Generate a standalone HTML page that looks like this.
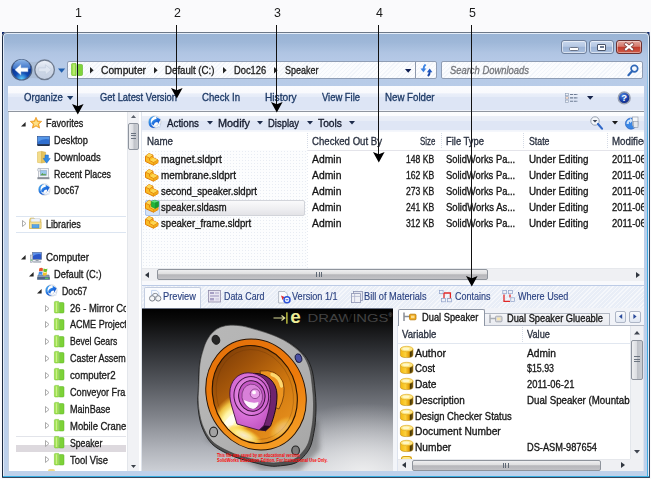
<!DOCTYPE html>
<html><head><meta charset="utf-8">
<style>
html,body{margin:0;padding:0;background:#fafafc;}
body{width:651px;height:479px;position:relative;overflow:hidden;font-family:"Liberation Sans",sans-serif;font-size:11.5px;color:#111;}
.a{position:absolute;}
svg{overflow:visible}
.t{position:absolute;white-space:nowrap;line-height:14px;height:14px;transform-origin:0 50%;-webkit-text-stroke:.32px currentColor;}
</style></head><body>
<div class="a" style="left:2px;top:32px;width:647.5px;height:446px;background:linear-gradient(180deg,#9ab4d5 0px,#9eb7d8 9px,#b0c5e3 20px,#b6cae7 30px,#b9cde9 80px,#bed1eb 100%);border:1px solid #35455c;border-top-color:#6d7887;border-left-color:#1c2a40;box-sizing:border-box;border-radius:5px 5px 1px 1px;box-shadow:inset 0 0 0 1px #e3ecf8;"></div>
<div class="a" style="left:2px;top:32px;width:3px;height:3px;background:#0a246a;border-radius:0;clip-path:polygon(0 0,100% 0,0 100%)"></div>
<div class="a" style="left:646.5px;top:32px;width:3px;height:3px;background:#0a246a;clip-path:polygon(0 0,100% 0,100% 100%)"></div>
<div class="a" style="left:3px;top:476px;width:645.5px;height:1px;background:#38aee2"></div>
<div class="a" style="left:647.2px;top:36px;width:1.3px;height:440px;background:linear-gradient(180deg,rgba(63,169,224,0) 0,#3fa9e0 120px)"></div>
<div class="a" style="left:561px;top:40px;width:26px;height:14px;border:1px solid #6f809c;box-sizing:border-box;border-radius:3px;box-shadow:inset 0 0 0 1px rgba(255,255,255,.55);background:linear-gradient(180deg,#c9d8ee 0%,#b6c8e3 45%,#9db4d6 50%,#a9bfde 100%);"></div>
<div class="a" style="left:589px;top:40px;width:25px;height:14px;border:1px solid #6f809c;box-sizing:border-box;border-radius:3px;box-shadow:inset 0 0 0 1px rgba(255,255,255,.55);background:linear-gradient(180deg,#c9d8ee 0%,#b6c8e3 45%,#9db4d6 50%,#a9bfde 100%);"></div>
<div class="a" style="left:616px;top:40px;width:25.5px;height:14px;border:1px solid #6a3030;box-sizing:border-box;border-radius:3px;box-shadow:inset 0 0 0 1px rgba(255,255,255,.4);background:linear-gradient(180deg,#e3a59c 0%,#d47a6e 45%,#c1392b 50%,#cf5a48 100%);"></div>
<div class="a" style="left:569px;top:46.5px;width:10px;height:4px;background:#fff;border:1px solid #6a7488;box-sizing:border-box;border-radius:1.5px"></div>
<div class="a" style="left:597px;top:43.5px;width:9px;height:7px;background:#fff;border:1px solid #4a5468;box-sizing:border-box;border-radius:1px"></div>
<div class="a" style="left:599.5px;top:46px;width:4px;height:2px;background:#6a7890"></div>
<svg class="a" style="left:623.7px;top:43.2px" width="10" height="8" viewBox="0 0 10 8"><path d="M2 1.4 L8 6.2 M8 1.4 L2 6.200" stroke="#7a3a3a" stroke-width="3.400" stroke-linecap="square"/><path d="M2 1.400 L8 6.200 M8 1.400 L2 6.200" stroke="#fff" stroke-width="2.100" stroke-linecap="square"/></svg>
<svg class="a" style="left:9px;top:58px" width="60" height="24" viewBox="0 0 60 24">
<defs>
<radialGradient id="bk_2" cx="50%" cy="95%" r="75%"><stop offset="0" stop-color="#5fd0ff"/><stop offset=".45" stop-color="#1048b0"/><stop offset="1" stop-color="#0a2f86"/></radialGradient>
<linearGradient id="bk2_2" x1="0" y1="0" x2="0" y2="1"><stop offset="0" stop-color="#9cc4f2"/><stop offset="1" stop-color="#3470cc"/></linearGradient>
<linearGradient id="fw_2" x1="0" y1="0" x2="0" y2="1"><stop offset="0" stop-color="#eef2f9"/><stop offset=".5" stop-color="#d0d9e8"/><stop offset="1" stop-color="#c3cee0"/></linearGradient>
</defs>
<path d="M12 2 Q24 6 35 2 L35 22 Q24 18 12 22 Z" fill="#a9bad3" opacity=".8"/>
<circle cx="12.6" cy="11.8" r="10.2" fill="url(#bk_2)" stroke="#4b5f80" stroke-width="1.2"/>
<path d="M3.6 10.5 A9 9 0 0 1 21.6 10.5 Q12.6 13.5 3.6 10.5Z" fill="url(#bk2_2)" opacity=".9"/>
<path d="M5.8 11.8 L12 6.3 L12 9.8 L19 9.8 L19 13.8 L12 13.8 L12 17.3 Z" fill="#fff" stroke="#8aa8d8" stroke-width=".5"/>
<circle cx="35.6" cy="11.8" r="9.8" fill="url(#fw_2)" stroke="#6f7b8e" stroke-width="1.3"/>
<path d="M42.4 11.8 L36.4 6.8 L36.4 9.9 L29.6 9.9 L29.6 13.7 L36.4 13.7 L36.4 16.8 Z" fill="#dfe6f1" stroke="#c0cbdc" stroke-width=".6"/>
<path d="M49 10.6 L56.2 10.6 L52.6 14.8 Z" fill="#1f5fae"/>
</svg>
<div class="a" style="left:67px;top:61px;width:370px;height:18px;border:1px solid #8f9db4;box-sizing:border-box;border-radius:2px;background-color:#fbfcfe;background-image:repeating-linear-gradient(135deg,rgba(170,190,220,.12) 0 1px,transparent 1px 3px);"></div>
<div class="a" style="left:415px;top:62px;width:1px;height:16px;background:#8d98ac"></div>
<svg class="a" style="left:70.5px;top:62.5px" width="12" height="13" viewBox="0 0 12 13"><path d="M0.5 1.5 Q0.5 0.5 1.5 0.5 L5 0.5 L5 12.5 L1.5 12.5 Q0.5 12.5 0.5 11.5Z" fill="#9be048" stroke="#6cbf2a" stroke-width=".6"/><path d="M6 1.5 L10.5 1.5 Q11.5 1.5 11.5 2.5 L11.5 11.5 Q11.5 12.5 10.5 12.5 L6 12.5Z" fill="#7fd43a" stroke="#5fb626" stroke-width=".6"/><rect x="2.3" y="1.5" width="1.4" height="10" fill="#c8f08c" opacity=".8"/></svg>
<svg class="a" style="left:89.5px;top:67px" width="4" height="6.5" viewBox="0 0 4 6.5"><path d="M0 0 L3.6 3.25 L0 6.5Z" fill="#222"/></svg>
<svg class="a" style="left:153.5px;top:67px" width="4" height="6.5" viewBox="0 0 4 6.5"><path d="M0 0 L3.6 3.25 L0 6.5Z" fill="#222"/></svg>
<svg class="a" style="left:222.5px;top:67px" width="4" height="6.5" viewBox="0 0 4 6.5"><path d="M0 0 L3.6 3.25 L0 6.5Z" fill="#222"/></svg>
<svg class="a" style="left:273.5px;top:67px" width="4" height="6.5" viewBox="0 0 4 6.5"><path d="M0 0 L3.6 3.25 L0 6.5Z" fill="#222"/></svg>
<span class="t" style="left:100.5px;top:62.9px;font-size:10.5px;color:#1c1c1c;transform:scaleX(0.976);">Computer</span>
<span class="t" style="left:164.5px;top:62.9px;font-size:10.5px;color:#1c1c1c;transform:scaleX(0.922);">Default (C:)</span>
<span class="t" style="left:233.7px;top:62.9px;font-size:10.5px;color:#1c1c1c;transform:scaleX(0.887);">Doc126</span>
<span class="t" style="left:285.3px;top:62.9px;font-size:10.5px;color:#1c1c1c;transform:scaleX(0.854);">Speaker</span>
<svg class="a" style="left:404.5px;top:68.5px" width="7" height="4" viewBox="0 0 7 4"><path d="M0 0 L6.4 0 L3.2 3.8Z" fill="#0c1c50"/></svg>
<svg class="a" style="left:419.5px;top:64px" width="13" height="12.5" viewBox="0 0 13 12.5"><path d="M5.600 .6 Q3.400 2.400 3.600 5" fill="none" stroke="#3f86e4" stroke-width="2"/><path d="M.5 4.500 L6.300 4.500 L3.400 8.200Z" fill="#3a7fe0"/><path d="M9.600 7.800 Q9.800 10.400 7.800 12" fill="none" stroke="#1c48a4" stroke-width="2"/><path d="M6.900 8.200 L12.400 8.200 L9.700 4.500Z" fill="#2058c0"/></svg>
<div class="a" style="left:441px;top:61px;width:202px;height:18px;border:1px solid #8f9db4;box-sizing:border-box;border-radius:2px;background-color:#fbfcfe;background-image:repeating-linear-gradient(135deg,rgba(170,190,220,.12) 0 1px,transparent 1px 3px);"></div>
<span class="t" style="left:449.5px;top:62.9px;font-size:10.5px;color:#75777c;transform:scaleX(0.896);font-style:italic;">Search Downloads</span>
<svg class="a" style="left:627px;top:63.5px" width="12" height="13" viewBox="0 0 12 13"><circle cx="7.4" cy="4.6" r="3.3" fill="#f4f8fd" stroke="#2f67b8" stroke-width="1.7"/><path d="M5 7.2 L1.4 11.2" stroke="#2f67b8" stroke-width="2.2" stroke-linecap="round"/></svg>
<div class="a" style="left:8px;top:85.5px;width:636px;height:25.5px;background:linear-gradient(180deg,#fafbfe 0px,#f9fafd 6.5px,#e9eef9 8px,#e6ecf8 10.5px,#dde5f5 11.5px,#dde5f5 23.5px,#eef2fa 24.2px,#eef2fa 25.5px);"></div>
<span class="t" style="left:23.6px;top:90.4px;font-size:10.5px;color:#1e3a66;transform:scaleX(0.913);">Organize</span>
<svg class="a" style="left:67px;top:96px" width="6.4" height="4" viewBox="0 0 6.4 4"><path d="M0 0 L6.400 0 L3.200 3.900Z" fill="#1e3a66"/></svg>
<span class="t" style="left:99.7px;top:90.4px;font-size:10.5px;color:#1e3a66;transform:scaleX(0.890);">Get Latest Version</span>
<span class="t" style="left:202.0px;top:90.4px;font-size:10.5px;color:#1e3a66;transform:scaleX(0.917);">Check In</span>
<span class="t" style="left:265.0px;top:90.4px;font-size:10.5px;color:#1e3a66;transform:scaleX(0.970);">History</span>
<span class="t" style="left:322.0px;top:90.4px;font-size:10.5px;color:#1e3a66;transform:scaleX(0.896);">View File</span>
<span class="t" style="left:385.0px;top:90.4px;font-size:10.5px;color:#1e3a66;transform:scaleX(0.924);">New Folder</span>
<svg class="a" style="left:565px;top:93px" width="14" height="10" viewBox="0 0 14 10"><rect x=".5" y=".3" width="3" height="2.4" fill="#eef2f8" stroke="#8d9bb3" stroke-width=".6"/><rect x=".5" y="3.7" width="3" height="2.4" fill="#f6d9c8" stroke="#8d9bb3" stroke-width=".6"/><rect x=".5" y="7.1" width="3" height="2.4" fill="#eef2f8" stroke="#8d9bb3" stroke-width=".6"/><path d="M5 1.5 H13 M5 4.9 H13 M5 8.3 H13" stroke="#6e7c94" stroke-width="1.1" stroke-dasharray="3 .8"/></svg>
<svg class="a" style="left:586.8px;top:96.2px" width="6.4" height="4" viewBox="0 0 6.4 4"><path d="M0 0 L6.400 0 L3.200 3.800Z" fill="#16234a"/></svg>
<svg class="a" style="left:616px;top:90px" width="16" height="16" viewBox="0 0 16 16"><defs><radialGradient id="hp_14" cx="40%" cy="30%" r="75%"><stop offset="0" stop-color="#4e86e0"/><stop offset=".6" stop-color="#1a3fa8"/><stop offset="1" stop-color="#0b1f78"/></radialGradient></defs><circle cx="8.200" cy="7.900" r="5.900" fill="url(#hp_14)" stroke="#98a0b0" stroke-width="1.500"/><text x="8.200" y="11.400" font-size="9.500" font-weight="bold" text-anchor="middle" fill="#fff" font-family="Liberation Sans,sans-serif">?</text></svg>
<div class="a" style="left:8px;top:111px;width:636px;height:360px;background:#fff"></div>
<div class="a" style="left:8px;top:111px;width:119px;height:360px;background:#fff"></div>
<div class="a" style="left:8px;top:111px;width:1px;height:360px;background:#c9d3e0"></div>
<svg class="a" style="left:21px;top:121.5px" width="5" height="5" viewBox="0 0 5 5"><path d="M4.6 0 L4.6 4.6 L0 4.6Z" fill="#262626"/></svg>
<svg class="a" style="left:29.5px;top:117px" width="12" height="11.5" viewBox="0 0 12 11.5"><path d="M6 .3 L7.7 4 L11.7 4.4 L8.7 7.1 L9.6 11.1 L6 9 L2.4 11.1 L3.3 7.1 L.3 4.4 L4.3 4Z" fill="#f9b93a" stroke="#e8901c" stroke-width=".7"/><path d="M6 2.6 L7 5 L9.4 5.3 L7.6 6.9 L8.1 9.2 L6 8 L3.9 9.2 L4.4 6.9 L2.6 5.3 L5 5Z" fill="#fde08a"/></svg>
<span class="t" style="left:45.7px;top:116.4px;font-size:10.5px;color:#1a1a1a;transform:scaleX(0.864);">Favorites</span>
<svg class="a" style="left:37px;top:135.5px" width="13" height="10.5" viewBox="0 0 13 10.5"><rect x=".4" y=".4" width="12.2" height="8.4" fill="#2f6fd0" stroke="#27457c" stroke-width=".6"/><path d="M.7 6 Q6 2 12.3 3.4 L12.3 .7 L.7 .7Z" fill="#5fa0ec" opacity=".8"/><rect x=".4" y="8.2" width="12.2" height="1.8" fill="#22324e"/></svg>
<span class="t" style="left:53.8px;top:133.3px;font-size:10.5px;color:#1a1a1a;transform:scaleX(0.880);">Desktop</span>
<svg class="a" style="left:37px;top:150.5px" width="13.5" height="13" viewBox="0 0 13.5 13"><path d="M.5 1 L4.6 .4 L4.6 12 L.5 11.4Z" fill="#f3dc8a" stroke="#d9b64c" stroke-width=".5"/><path d="M4.6 .4 L8.6 1.2 L8.6 11.2 L4.6 12Z" fill="#e5c45c" stroke="#cfa43a" stroke-width=".5"/><path d="M8 4 L11.4 4 L11.4 7.4 L13.2 7.4 L9.7 12.2 L6.2 7.4 L8 7.4Z" fill="#2f8be6" stroke="#1c62c0" stroke-width=".5"/></svg>
<span class="t" style="left:53.8px;top:150.1px;font-size:10.5px;color:#1a1a1a;transform:scaleX(0.899);">Downloads</span>
<svg class="a" style="left:37px;top:168px" width="12.5" height="11.5" viewBox="0 0 12.5 11.5"><rect x="1.4" y=".4" width="10" height="9.4" fill="#f2f4f7" stroke="#a9afb9" stroke-width=".7"/><rect x="3.2" y="2.4" width="6.4" height="5" fill="#9cc8ee" stroke="#7b93ad" stroke-width=".4"/><path d="M3.4 7.2 L5.4 5 L7 6.4 L8 5.6 L9.4 7.2Z" fill="#5aa04a"/><rect x=".4" y="9.2" width="12" height="2" fill="#8a9098"/><circle cx="2" cy="1.8" r="1.6" fill="#dfe3ea" stroke="#9aa2ae" stroke-width=".4"/></svg>
<span class="t" style="left:53.8px;top:166.7px;font-size:10.5px;color:#1a1a1a;transform:scaleX(0.842);">Recent Places</span>
<svg class="a" style="left:37.5px;top:183.3px" width="12.5" height="12.5" viewBox="0 0 12.5 12.5"><defs><linearGradient id="sy_20" x1="0" y1="0" x2="1" y2="1"><stop offset="0" stop-color="#58c0f4"/><stop offset=".5" stop-color="#1f6fe0"/><stop offset="1" stop-color="#1448b8"/></linearGradient></defs><circle cx="6.3" cy="6.5" r="5.7" fill="#fdfdfe" stroke="#c4c8d0" stroke-width=".7"/><path d="M6.6 .9 Q1.8 2.6 2.6 7.4 Q3.2 10.6 7.4 12 Q.6 12.6 .5 6.6 Q.6 1.2 6.6 .9Z" fill="url(#sy_20)"/><path d="M3 8.4 Q3.2 4.600 8 3.400 L7.400 1.600 L11.600 4.200 L9.400 8.400 L8.800 6.400 Q5.800 6.400 5.400 9.600Z" fill="url(#sy_20)"/><path d="M3.400 9.200 Q6 11.400 9 9.600 L8.200 8.800 L11.400 8.200 L10.800 11.600 L10 10.600 Q6.400 13 3.400 9.200Z" fill="#fff" stroke="#9ab4dc" stroke-width=".35"/></svg>
<span class="t" style="left:53.8px;top:182.8px;font-size:10.5px;color:#1a1a1a;transform:scaleX(0.824);">Doc67</span>
<div class="a" style="left:16px;top:215.5px;width:110px;height:1px;background:#dce5f1"></div>
<div class="a" style="left:16px;top:231.5px;width:110px;height:1px;background:#dce5f1"></div>
<svg class="a" style="left:21.5px;top:220px" width="5" height="7" viewBox="0 0 5 7"><path d="M.5 .5 L4 3.5 L.5 6.5Z" fill="#fff" stroke="#a2a2a2" stroke-width=".9"/></svg>
<svg class="a" style="left:29px;top:216.5px" width="13" height="12" viewBox="0 0 13 12"><path d="M.5 3 L.5 11.4 L12 11.4 L12 2.4 L6 2.4 L5 1 L1.4 1Z" fill="#f2d778" stroke="#cda83c" stroke-width=".5"/><rect x="2" y="1.8" width="9" height="4" fill="#eef3f9" stroke="#b8c2d0" stroke-width=".4"/><path d="M.5 5 L12 5 L12 11.4 L.5 11.4Z" fill="#f6e39a" stroke="#cda83c" stroke-width=".5"/><rect x="3" y="7.6" width="7" height="3.4" fill="#58a6e8" stroke="#2f78c8" stroke-width=".4"/></svg>
<span class="t" style="left:45.7px;top:216.6px;font-size:10.5px;color:#1a1a1a;transform:scaleX(0.862);">Libraries</span>
<svg class="a" style="left:21px;top:255px" width="5" height="5" viewBox="0 0 5 5"><path d="M4.6 0 L4.6 4.6 L0 4.6Z" fill="#262626"/></svg>
<svg class="a" style="left:29.5px;top:251.5px" width="12" height="11.5" viewBox="0 0 12 11.5"><rect x="2.6" y=".4" width="9" height="7" fill="#2a56c8" stroke="#6a7a98" stroke-width=".7"/><path d="M3 4 Q7 1.4 11.2 2.4 L11.2 .8 L3 .8Z" fill="#6aa0f0" opacity=".8"/><rect x="5.6" y="7.6" width="3" height="1.6" fill="#9aa2ae"/><rect x="3.4" y="9" width="7.6" height="1.6" fill="#c2c8d2" stroke="#8a92a0" stroke-width=".3"/><rect x=".3" y="3" width="2.4" height="7.4" fill="#d2d8e2" stroke="#7a8496" stroke-width=".4"/><rect x=".8" y="7.6" width="1.4" height=".9" fill="#3fbf3f"/></svg>
<span class="t" style="left:45.7px;top:250.3px;font-size:10.5px;color:#1a1a1a;transform:scaleX(0.931);">Computer</span>
<svg class="a" style="left:29px;top:272px" width="5" height="5" viewBox="0 0 5 5"><path d="M4.6 0 L4.6 4.6 L0 4.6Z" fill="#262626"/></svg>
<svg class="a" style="left:37px;top:267px" width="13" height="13" viewBox="0 0 13 13"><path d="M1 8 L12 8 L12.6 12.4 L.4 12.4Z" fill="#8a9cb4" stroke="#56657c" stroke-width=".5"/><rect x=".4" y="10" width="12.2" height="2.4" fill="#4f6788"/><rect x="8" y="10.7" width="3.4" height="1" fill="#5fe05f"/><path d="M2.2 1.6 Q4 .2 6 1.4 L5.6 4.4 Q3.8 3.4 2 4.6Z" fill="#e8542c"/><path d="M6.6 1.6 Q8.6 2.6 10.4 1.4 L10 4.4 Q8.2 5.6 6.2 4.6Z" fill="#6cc02c"/><path d="M1.8 5.2 Q3.6 4 5.6 5 L5.2 8 Q3.4 7 1.4 8.2Z" fill="#3f8fe8"/><path d="M6.2 5.2 Q8 6.2 10 5 L9.6 8 Q7.8 9.2 5.8 8.2Z" fill="#f4c22c"/></svg>
<span class="t" style="left:53.8px;top:267.3px;font-size:10.5px;color:#1a1a1a;transform:scaleX(0.885);">Default (C:)</span>
<svg class="a" style="left:37px;top:288.5px" width="5" height="5" viewBox="0 0 5 5"><path d="M4.6 0 L4.6 4.6 L0 4.6Z" fill="#262626"/></svg>
<svg class="a" style="left:45px;top:284px" width="12.5" height="12.5" viewBox="0 0 12.5 12.5"><defs><linearGradient id="sy_28" x1="0" y1="0" x2="1" y2="1"><stop offset="0" stop-color="#58c0f4"/><stop offset=".5" stop-color="#1f6fe0"/><stop offset="1" stop-color="#1448b8"/></linearGradient></defs><circle cx="6.3" cy="6.5" r="5.7" fill="#fdfdfe" stroke="#c4c8d0" stroke-width=".7"/><path d="M6.6 .9 Q1.8 2.6 2.6 7.4 Q3.2 10.6 7.4 12 Q.6 12.6 .5 6.6 Q.6 1.2 6.6 .9Z" fill="url(#sy_28)"/><path d="M3 8.4 Q3.2 4.600 8 3.400 L7.400 1.600 L11.600 4.200 L9.400 8.400 L8.800 6.400 Q5.800 6.400 5.400 9.600Z" fill="url(#sy_28)"/><path d="M3.400 9.200 Q6 11.400 9 9.600 L8.200 8.800 L11.400 8.200 L10.800 11.600 L10 10.600 Q6.400 13 3.400 9.200Z" fill="#fff" stroke="#9ab4dc" stroke-width=".35"/></svg>
<span class="t" style="left:62.0px;top:283.7px;font-size:10.5px;color:#1a1a1a;transform:scaleX(0.830);">Doc67</span>
<div class="a" style="left:16px;top:435.5px;width:110px;height:1px;background:#e2e4ea"></div>
<div class="a" style="left:16px;top:445px;width:110px;height:6.5px;background:#ddd9de"></div>
<svg class="a" style="left:45px;top:304.7px" width="5" height="7" viewBox="0 0 5 7"><path d="M.5 .5 L4 3.5 L.5 6.5Z" fill="#fff" stroke="#a2a2a2" stroke-width=".9"/></svg>
<svg class="a" style="left:53.5px;top:301.3px" width="10.5" height="12.5" viewBox="0 0 10.5 12.5"><path d="M.4 1.4 Q.4 .4 1.4 .4 L4.6 .4 L4.6 12 L1.4 12 Q.4 12 .4 11Z" fill="#9fe24c" stroke="#6fc22c" stroke-width=".5"/><path d="M5.4 1.6 L9 1.6 Q10 1.6 10 2.6 L10 11 Q10 12 9 12 L5.4 12Z" fill="#7dd238" stroke="#58b022" stroke-width=".5"/><rect x="1.8" y="1.4" width="1.3" height="9.6" fill="#d2f49c" opacity=".8"/></svg>
<div class="a" style="left:0;top:300.9px;width:126.0px;height:15px;overflow:hidden"><span class="t" style="left:69.7px;top:0px;font-size:10.5px;color:#1a1a1a;transform:scaleX(0.900);">26 - Mirror Co</span></div>
<svg class="a" style="left:45px;top:321.2px" width="5" height="7" viewBox="0 0 5 7"><path d="M.5 .5 L4 3.5 L.5 6.5Z" fill="#fff" stroke="#a2a2a2" stroke-width=".9"/></svg>
<svg class="a" style="left:53.5px;top:317.8px" width="10.5" height="12.5" viewBox="0 0 10.5 12.5"><path d="M.4 1.4 Q.4 .4 1.4 .4 L4.6 .4 L4.6 12 L1.4 12 Q.4 12 .4 11Z" fill="#9fe24c" stroke="#6fc22c" stroke-width=".5"/><path d="M5.4 1.6 L9 1.6 Q10 1.6 10 2.6 L10 11 Q10 12 9 12 L5.4 12Z" fill="#7dd238" stroke="#58b022" stroke-width=".5"/><rect x="1.8" y="1.4" width="1.3" height="9.6" fill="#d2f49c" opacity=".8"/></svg>
<div class="a" style="left:0;top:317.4px;width:126.0px;height:15px;overflow:hidden"><span class="t" style="left:69.7px;top:0px;font-size:10.5px;color:#1a1a1a;transform:scaleX(0.862);">ACME Project</span></div>
<svg class="a" style="left:45px;top:337.9px" width="5" height="7" viewBox="0 0 5 7"><path d="M.5 .5 L4 3.5 L.5 6.5Z" fill="#fff" stroke="#a2a2a2" stroke-width=".9"/></svg>
<svg class="a" style="left:53.5px;top:334.5px" width="10.5" height="12.5" viewBox="0 0 10.5 12.5"><path d="M.4 1.4 Q.4 .4 1.4 .4 L4.6 .4 L4.6 12 L1.4 12 Q.4 12 .4 11Z" fill="#9fe24c" stroke="#6fc22c" stroke-width=".5"/><path d="M5.4 1.6 L9 1.6 Q10 1.6 10 2.6 L10 11 Q10 12 9 12 L5.4 12Z" fill="#7dd238" stroke="#58b022" stroke-width=".5"/><rect x="1.8" y="1.4" width="1.3" height="9.6" fill="#d2f49c" opacity=".8"/></svg>
<div class="a" style="left:0;top:334.1px;width:126.0px;height:15px;overflow:hidden"><span class="t" style="left:69.7px;top:0px;font-size:10.5px;color:#1a1a1a;transform:scaleX(0.819);">Bevel Gears</span></div>
<svg class="a" style="left:45px;top:354.5px" width="5" height="7" viewBox="0 0 5 7"><path d="M.5 .5 L4 3.5 L.5 6.5Z" fill="#fff" stroke="#a2a2a2" stroke-width=".9"/></svg>
<svg class="a" style="left:53.5px;top:351.1px" width="10.5" height="12.5" viewBox="0 0 10.5 12.5"><path d="M.4 1.4 Q.4 .4 1.4 .4 L4.6 .4 L4.6 12 L1.4 12 Q.4 12 .4 11Z" fill="#9fe24c" stroke="#6fc22c" stroke-width=".5"/><path d="M5.4 1.6 L9 1.6 Q10 1.6 10 2.6 L10 11 Q10 12 9 12 L5.4 12Z" fill="#7dd238" stroke="#58b022" stroke-width=".5"/><rect x="1.8" y="1.4" width="1.3" height="9.6" fill="#d2f49c" opacity=".8"/></svg>
<div class="a" style="left:0;top:350.7px;width:126.0px;height:15px;overflow:hidden"><span class="t" style="left:69.7px;top:0px;font-size:10.5px;color:#1a1a1a;transform:scaleX(0.854);">Caster Assem</span></div>
<svg class="a" style="left:45px;top:371.7px" width="5" height="7" viewBox="0 0 5 7"><path d="M.5 .5 L4 3.5 L.5 6.5Z" fill="#fff" stroke="#a2a2a2" stroke-width=".9"/></svg>
<svg class="a" style="left:53.5px;top:368.3px" width="10.5" height="12.5" viewBox="0 0 10.5 12.5"><path d="M.4 1.4 Q.4 .4 1.4 .4 L4.6 .4 L4.6 12 L1.4 12 Q.4 12 .4 11Z" fill="#9fe24c" stroke="#6fc22c" stroke-width=".5"/><path d="M5.4 1.6 L9 1.6 Q10 1.6 10 2.6 L10 11 Q10 12 9 12 L5.4 12Z" fill="#7dd238" stroke="#58b022" stroke-width=".5"/><rect x="1.8" y="1.4" width="1.3" height="9.6" fill="#d2f49c" opacity=".8"/></svg>
<div class="a" style="left:0;top:367.9px;width:126.0px;height:15px;overflow:hidden"><span class="t" style="left:69.7px;top:0px;font-size:10.5px;color:#1a1a1a;transform:scaleX(0.917);">computer2</span></div>
<svg class="a" style="left:45px;top:388.7px" width="5" height="7" viewBox="0 0 5 7"><path d="M.5 .5 L4 3.5 L.5 6.5Z" fill="#fff" stroke="#a2a2a2" stroke-width=".9"/></svg>
<svg class="a" style="left:53.5px;top:385.3px" width="10.5" height="12.5" viewBox="0 0 10.5 12.5"><path d="M.4 1.4 Q.4 .4 1.4 .4 L4.6 .4 L4.6 12 L1.4 12 Q.4 12 .4 11Z" fill="#9fe24c" stroke="#6fc22c" stroke-width=".5"/><path d="M5.4 1.6 L9 1.6 Q10 1.6 10 2.6 L10 11 Q10 12 9 12 L5.4 12Z" fill="#7dd238" stroke="#58b022" stroke-width=".5"/><rect x="1.8" y="1.4" width="1.3" height="9.6" fill="#d2f49c" opacity=".8"/></svg>
<div class="a" style="left:0;top:384.9px;width:126.0px;height:15px;overflow:hidden"><span class="t" style="left:69.7px;top:0px;font-size:10.5px;color:#1a1a1a;transform:scaleX(0.869);">Conveyor Fra</span></div>
<svg class="a" style="left:45px;top:405.7px" width="5" height="7" viewBox="0 0 5 7"><path d="M.5 .5 L4 3.5 L.5 6.5Z" fill="#fff" stroke="#a2a2a2" stroke-width=".9"/></svg>
<svg class="a" style="left:53.5px;top:402.3px" width="10.5" height="12.5" viewBox="0 0 10.5 12.5"><path d="M.4 1.4 Q.4 .4 1.4 .4 L4.6 .4 L4.6 12 L1.4 12 Q.4 12 .4 11Z" fill="#9fe24c" stroke="#6fc22c" stroke-width=".5"/><path d="M5.4 1.6 L9 1.6 Q10 1.6 10 2.6 L10 11 Q10 12 9 12 L5.4 12Z" fill="#7dd238" stroke="#58b022" stroke-width=".5"/><rect x="1.8" y="1.4" width="1.3" height="9.6" fill="#d2f49c" opacity=".8"/></svg>
<div class="a" style="left:0;top:401.9px;width:126.0px;height:15px;overflow:hidden"><span class="t" style="left:69.7px;top:0px;font-size:10.5px;color:#1a1a1a;transform:scaleX(0.863);">MainBase</span></div>
<svg class="a" style="left:45px;top:422.4px" width="5" height="7" viewBox="0 0 5 7"><path d="M.5 .5 L4 3.5 L.5 6.5Z" fill="#fff" stroke="#a2a2a2" stroke-width=".9"/></svg>
<svg class="a" style="left:53.5px;top:419px" width="10.5" height="12.5" viewBox="0 0 10.5 12.5"><path d="M.4 1.4 Q.4 .4 1.4 .4 L4.6 .4 L4.6 12 L1.4 12 Q.4 12 .4 11Z" fill="#9fe24c" stroke="#6fc22c" stroke-width=".5"/><path d="M5.4 1.6 L9 1.6 Q10 1.6 10 2.6 L10 11 Q10 12 9 12 L5.4 12Z" fill="#7dd238" stroke="#58b022" stroke-width=".5"/><rect x="1.8" y="1.4" width="1.3" height="9.6" fill="#d2f49c" opacity=".8"/></svg>
<div class="a" style="left:0;top:418.6px;width:126.0px;height:15px;overflow:hidden"><span class="t" style="left:69.7px;top:0px;font-size:10.5px;color:#1a1a1a;transform:scaleX(0.902);">Mobile Crane</span></div>
<svg class="a" style="left:45px;top:439.5px" width="5" height="7" viewBox="0 0 5 7"><path d="M.5 .5 L4 3.5 L.5 6.5Z" fill="#fff" stroke="#a2a2a2" stroke-width=".9"/></svg>
<svg class="a" style="left:53.5px;top:436.1px" width="10.5" height="12.5" viewBox="0 0 10.5 12.5"><path d="M.4 1.4 Q.4 .4 1.4 .4 L4.6 .4 L4.6 12 L1.4 12 Q.4 12 .4 11Z" fill="#9fe24c" stroke="#6fc22c" stroke-width=".5"/><path d="M5.4 1.6 L9 1.6 Q10 1.6 10 2.6 L10 11 Q10 12 9 12 L5.4 12Z" fill="#7dd238" stroke="#58b022" stroke-width=".5"/><rect x="1.8" y="1.4" width="1.3" height="9.6" fill="#d2f49c" opacity=".8"/></svg>
<div class="a" style="left:0;top:435.7px;width:126.0px;height:15px;overflow:hidden"><span class="t" style="left:69.7px;top:0px;font-size:10.5px;color:#1a1a1a;transform:scaleX(0.826);">Speaker</span></div>
<svg class="a" style="left:45px;top:456.4px" width="5" height="7" viewBox="0 0 5 7"><path d="M.5 .5 L4 3.5 L.5 6.5Z" fill="#fff" stroke="#a2a2a2" stroke-width=".9"/></svg>
<svg class="a" style="left:53.5px;top:453px" width="10.5" height="12.5" viewBox="0 0 10.5 12.5"><path d="M.4 1.4 Q.4 .4 1.4 .4 L4.6 .4 L4.6 12 L1.4 12 Q.4 12 .4 11Z" fill="#9fe24c" stroke="#6fc22c" stroke-width=".5"/><path d="M5.4 1.6 L9 1.6 Q10 1.6 10 2.6 L10 11 Q10 12 9 12 L5.4 12Z" fill="#7dd238" stroke="#58b022" stroke-width=".5"/><rect x="1.8" y="1.4" width="1.3" height="9.6" fill="#d2f49c" opacity=".8"/></svg>
<div class="a" style="left:0;top:452.6px;width:126.0px;height:15px;overflow:hidden"><span class="t" style="left:69.7px;top:0px;font-size:10.5px;color:#1a1a1a;transform:scaleX(0.896);">Tool Vise</span></div>
<div class="a" style="left:48px;top:469px;width:7px;height:2px;background:#f0dc8c;border-radius:2px 2px 0 0"></div>
<div class="a" style="left:127px;top:111px;width:12px;height:360px;background:#f1f2f5;border-left:1px solid #e3e6eb;box-sizing:border-box"></div>
<div class="a" style="left:128px;top:122.5px;width:10.5px;height:27px;border:1px solid #8e949e;box-sizing:border-box;border-radius:2px;background:linear-gradient(90deg,#eeeff1 0%,#dcdee2 45%,#bfc2c8 55%,#cbced3 100%)"></div>
<div class="a" style="left:131px;top:132.5px;width:5px;height:1px;background:#6b7480"></div>
<div class="a" style="left:131px;top:135px;width:5px;height:1px;background:#6b7480"></div>
<div class="a" style="left:131px;top:137.5px;width:5px;height:1px;background:#6b7480"></div>
<svg class="a" style="left:131px;top:115px" width="5" height="3" viewBox="0 0 5 3"><path d="M0 3 L2.500 0 L5 3Z" fill="#5a606a"/></svg>
<svg class="a" style="left:131px;top:464.5px" width="5" height="3" viewBox="0 0 5 3"><path d="M0 0 L5 0 L2.500 3Z" fill="#3a4048"/></svg>
<div class="a" style="left:139px;top:111px;width:3px;height:360px;background:#fff"></div>
<div class="a" style="left:141px;top:111px;width:1px;height:360px;background:#dfe4ec"></div>
<div class="a" style="left:142px;top:112px;width:502px;height:20px;background:linear-gradient(180deg,#fcfdfe 0px,#fbfcfe 4px,#ebeff8 4.5px,#e8edf7 8.5px,#dfe6f5 9px,#dfe6f5 18px,#f2f5fb 18.5px,#f6f8fc 20px)"></div>
<div class="a" style="left:142px;top:131.5px;width:502px;height:1px;background:#c9d1de"></div>
<svg class="a" style="left:147.5px;top:115.3px" width="13.5" height="13.5" viewBox="0 0 12.5 12.5"><defs><linearGradient id="sy_51" x1="0" y1="0" x2="1" y2="1"><stop offset="0" stop-color="#58c0f4"/><stop offset=".5" stop-color="#1f6fe0"/><stop offset="1" stop-color="#1448b8"/></linearGradient></defs><circle cx="6.3" cy="6.5" r="5.7" fill="#fdfdfe" stroke="#c4c8d0" stroke-width=".7"/><path d="M6.6 .9 Q1.8 2.6 2.6 7.4 Q3.2 10.6 7.4 12 Q.6 12.6 .5 6.6 Q.6 1.2 6.6 .9Z" fill="url(#sy_51)"/><path d="M3 8.4 Q3.2 4.600 8 3.400 L7.400 1.600 L11.600 4.200 L9.400 8.400 L8.800 6.400 Q5.800 6.400 5.400 9.600Z" fill="url(#sy_51)"/><path d="M3.400 9.200 Q6 11.400 9 9.600 L8.200 8.800 L11.400 8.200 L10.800 11.600 L10 10.600 Q6.400 13 3.400 9.200Z" fill="#fff" stroke="#9ab4dc" stroke-width=".35"/></svg>
<span class="t" style="left:167.0px;top:115.8px;font-size:10.5px;color:#141a2c;transform:scaleX(0.929);">Actions</span>
<span class="t" style="left:217.8px;top:115.8px;font-size:10.5px;color:#141a2c;transform:scaleX(1.035);">Modify</span>
<span class="t" style="left:268.0px;top:115.8px;font-size:10.5px;color:#141a2c;transform:scaleX(0.900);">Display</span>
<span class="t" style="left:317.8px;top:115.8px;font-size:10.5px;color:#141a2c;transform:scaleX(0.979);">Tools</span>
<svg class="a" style="left:207px;top:121px" width="6" height="4" viewBox="0 0 6 4"><path d="M0 0 L6 0 L3 3.6Z" fill="#1d2b4a"/></svg>
<svg class="a" style="left:257px;top:121px" width="6" height="4" viewBox="0 0 6 4"><path d="M0 0 L6 0 L3 3.6Z" fill="#1d2b4a"/></svg>
<svg class="a" style="left:307px;top:121px" width="6" height="4" viewBox="0 0 6 4"><path d="M0 0 L6 0 L3 3.6Z" fill="#1d2b4a"/></svg>
<svg class="a" style="left:349px;top:121px" width="6" height="4" viewBox="0 0 6 4"><path d="M0 0 L6 0 L3 3.6Z" fill="#1d2b4a"/></svg>
<svg class="a" style="left:589.5px;top:115.5px" width="13" height="14" viewBox="0 0 13 14"><circle cx="5" cy="5" r="4.2" fill="#f4f7fb" stroke="#9aa3b2" stroke-width="1"/><path d="M2.6 4 L7.4 4 L5 6.6Z" fill="#3c4658"/><path d="M8 8 L12 12.6" stroke="#2f67c8" stroke-width="2.2" stroke-linecap="round"/></svg>
<svg class="a" style="left:612px;top:120.5px" width="6" height="4" viewBox="0 0 6 4"><path d="M0 0 L6 0 L3 3.6Z" fill="#1a1a1a"/></svg>
<svg class="a" style="left:624.5px;top:115.5px" width="13.5" height="14" viewBox="0 0 13.5 14"><circle cx="6" cy="7.6" r="5.6" fill="#3a86e4" stroke="#1e58b8" stroke-width=".6"/><path d="M1.6 8 Q1.4 4.4 5 3.6 L5 2 L8 4.6 L5 7.2 L5 5.6 Q3.6 6 3.8 8Z" fill="#cfe4fb"/><rect x="7.4" y="1" width="5.6" height="8.6" fill="#f4f6f9" stroke="#8d96a6" stroke-width=".6"/><rect x="8.4" y="5.4" width="4.6" height="6" fill="#e4e8ee" stroke="#8d96a6" stroke-width=".6"/></svg>
<div class="a" style="left:142px;top:132px;width:502px;height:18px;background:#fff"></div>
<div class="a" style="left:142px;top:150px;width:502px;height:1px;background:#e4e4ea"></div>
<span class="t" style="left:147.4px;top:134.4px;font-size:10.5px;color:#2a3140;transform:scaleX(0.928);">Name</span>
<span class="t" style="left:311.6px;top:134.4px;font-size:10.5px;color:#2a3140;transform:scaleX(0.916);">Checked Out By</span>
<span class="t" style="left:419.7px;top:134.4px;font-size:10.5px;color:#2a3140;transform:scaleX(0.749);">Size</span>
<span class="t" style="left:446.3px;top:134.4px;font-size:10.5px;color:#2a3140;transform:scaleX(0.896);">File Type</span>
<span class="t" style="left:529.0px;top:134.4px;font-size:10.5px;color:#2a3140;transform:scaleX(0.836);">State</span>
<div class="a" style="left:0;top:134.4px;width:644.0px;height:15px;overflow:hidden"><span class="t" style="left:612.3px;top:0px;font-size:10.5px;color:#2a3140;transform:scaleX(0.925);">Modified</span></div>
<div class="a" style="left:306.5px;top:133px;width:1px;height:16px;background:repeating-linear-gradient(180deg,#d5dbe6 0 1px,#fff 1px 2px)"></div>
<div class="a" style="left:440.5px;top:133px;width:1px;height:16px;background:repeating-linear-gradient(180deg,#d5dbe6 0 1px,#fff 1px 2px)"></div>
<div class="a" style="left:523px;top:133px;width:1px;height:16px;background:repeating-linear-gradient(180deg,#d5dbe6 0 1px,#fff 1px 2px)"></div>
<div class="a" style="left:606.5px;top:133px;width:1px;height:16px;background:repeating-linear-gradient(180deg,#d5dbe6 0 1px,#fff 1px 2px)"></div>
<div class="a" style="left:142px;top:150px;width:165px;height:118px;background-color:#fcfdfe;background-image:radial-gradient(#e8ecf3 .6px,transparent .7px);background-size:3px 3px"></div>
<div class="a" style="left:306.5px;top:150px;width:1px;height:118px;background:repeating-linear-gradient(180deg,#e6eaf1 0 1px,#fff 1px 3px)"></div>
<div class="a" style="left:145px;top:200px;width:160px;height:15.5px;border:1px solid #d2d4da;box-sizing:border-box;border-radius:2px;background:linear-gradient(180deg,#fafafb 0%,#ededf0 60%,#e3e3e7 100%)"></div>
<div class="a" style="left:145px;top:200px;width:14.5px;height:15.5px;border:1px solid #a8c4ec;box-sizing:border-box;border-radius:2px;background:#d4e2f6"></div>
<svg class="a" style="left:145.2px;top:152.5px" width="13.5" height="12.5" viewBox="0 0 13.5 12.5"><path d="M.5 3.2 L4 .6 L8 2.2 L8 4.600 L13 7 L13 9.600 L8.500 12.200 L.5 8.500Z" fill="#f9bc24" stroke="#e07c08" stroke-width="1" stroke-linejoin="round"/><path d="M.5 3.200 L4.500 5 L8 2.200 L4 .6Z" fill="#fdd858"/><path d="M4.500 7.400 L8 4.800 L13 7 L8.500 9.600Z" fill="#fdd650"/><path d="M.5 3.200 L4.500 5 L4.500 7.400 L8.500 9.600 L8.500 12.200 M4.500 5 L8 2.400 M8.500 9.600 L13 7" fill="none" stroke="#e07c08" stroke-width=".8"/><path d="M8.500 9.800 L13 7.200 L13 9.600 L8.500 12.200Z" fill="#f0a818"/></svg>
<span class="t" style="left:160.9px;top:152.4px;font-size:10.5px;color:#151515;transform:scaleX(0.954);">magnet.sldprt</span>
<span class="t" style="left:311.6px;top:152.4px;font-size:10.5px;color:#151515;transform:scaleX(0.988);">Admin</span>
<span class="t" style="left:405.5px;top:152.4px;font-size:10.5px;color:#151515;transform:scaleX(0.819);">148 KB</span>
<span class="t" style="left:446.3px;top:152.4px;font-size:10.5px;color:#151515;transform:scaleX(0.894);">SolidWorks Pa...</span>
<span class="t" style="left:529.0px;top:152.4px;font-size:10.5px;color:#151515;transform:scaleX(0.935);">Under Editing</span>
<div class="a" style="left:0;top:152.4px;width:644.0px;height:15px;overflow:hidden"><span class="t" style="left:612.3px;top:0px;font-size:10.5px;color:#151515;transform:scaleX(0.895);">2011-06-21</span></div>
<svg class="a" style="left:145.2px;top:168.5px" width="13.5" height="12.5" viewBox="0 0 13.5 12.5"><path d="M.5 3.2 L4 .6 L8 2.2 L8 4.600 L13 7 L13 9.600 L8.500 12.200 L.5 8.500Z" fill="#f9bc24" stroke="#e07c08" stroke-width="1" stroke-linejoin="round"/><path d="M.5 3.200 L4.500 5 L8 2.200 L4 .6Z" fill="#fdd858"/><path d="M4.500 7.400 L8 4.800 L13 7 L8.500 9.600Z" fill="#fdd650"/><path d="M.5 3.200 L4.500 5 L4.500 7.400 L8.500 9.600 L8.500 12.200 M4.500 5 L8 2.400 M8.500 9.600 L13 7" fill="none" stroke="#e07c08" stroke-width=".8"/><path d="M8.500 9.800 L13 7.200 L13 9.600 L8.500 12.200Z" fill="#f0a818"/></svg>
<span class="t" style="left:160.9px;top:168.4px;font-size:10.5px;color:#151515;transform:scaleX(0.951);">membrane.sldprt</span>
<span class="t" style="left:311.6px;top:168.4px;font-size:10.5px;color:#151515;transform:scaleX(0.988);">Admin</span>
<span class="t" style="left:405.5px;top:168.4px;font-size:10.5px;color:#151515;transform:scaleX(0.819);">162 KB</span>
<span class="t" style="left:446.3px;top:168.4px;font-size:10.5px;color:#151515;transform:scaleX(0.894);">SolidWorks Pa...</span>
<span class="t" style="left:529.0px;top:168.4px;font-size:10.5px;color:#151515;transform:scaleX(0.935);">Under Editing</span>
<div class="a" style="left:0;top:168.4px;width:644.0px;height:15px;overflow:hidden"><span class="t" style="left:612.3px;top:0px;font-size:10.5px;color:#151515;transform:scaleX(0.895);">2011-06-21</span></div>
<svg class="a" style="left:145.2px;top:184.2px" width="13.5" height="12.5" viewBox="0 0 13.5 12.5"><path d="M.5 3.2 L4 .6 L8 2.2 L8 4.600 L13 7 L13 9.600 L8.500 12.200 L.5 8.500Z" fill="#f9bc24" stroke="#e07c08" stroke-width="1" stroke-linejoin="round"/><path d="M.5 3.200 L4.500 5 L8 2.200 L4 .6Z" fill="#fdd858"/><path d="M4.500 7.400 L8 4.800 L13 7 L8.500 9.600Z" fill="#fdd650"/><path d="M.5 3.200 L4.500 5 L4.500 7.400 L8.500 9.600 L8.500 12.200 M4.500 5 L8 2.400 M8.500 9.600 L13 7" fill="none" stroke="#e07c08" stroke-width=".8"/><path d="M8.500 9.800 L13 7.200 L13 9.600 L8.500 12.200Z" fill="#f0a818"/></svg>
<span class="t" style="left:160.9px;top:184.1px;font-size:10.5px;color:#151515;transform:scaleX(0.912);">second_speaker.sldprt</span>
<span class="t" style="left:311.6px;top:184.1px;font-size:10.5px;color:#151515;transform:scaleX(0.988);">Admin</span>
<span class="t" style="left:405.5px;top:184.1px;font-size:10.5px;color:#151515;transform:scaleX(0.819);">273 KB</span>
<span class="t" style="left:446.3px;top:184.1px;font-size:10.5px;color:#151515;transform:scaleX(0.894);">SolidWorks Pa...</span>
<span class="t" style="left:529.0px;top:184.1px;font-size:10.5px;color:#151515;transform:scaleX(0.935);">Under Editing</span>
<div class="a" style="left:0;top:184.1px;width:644.0px;height:15px;overflow:hidden"><span class="t" style="left:612.3px;top:0px;font-size:10.5px;color:#151515;transform:scaleX(0.895);">2011-06-21</span></div>
<svg class="a" style="left:145.2px;top:200.1px" width="13.5" height="12.5" viewBox="0 0 13.5 12.5"><path d="M.5 3.2 L4 .6 L8 2.2 L8 4.600 L13 7 L13 9.600 L8.500 12.200 L.5 8.500Z" fill="#f9bc24" stroke="#e07c08" stroke-width="1" stroke-linejoin="round"/><path d="M.5 3.200 L4.500 5 L8 2.200 L4 .6Z" fill="#fdd858"/><path d="M4.500 7.400 L8 4.800 L13 7 L8.500 9.600Z" fill="#fdd650"/><path d="M.5 3.200 L4.500 5 L4.500 7.400 L8.500 9.600 L8.500 12.200 M4.500 5 L8 2.400 M8.500 9.600 L13 7" fill="none" stroke="#e07c08" stroke-width=".8"/><path d="M8.500 9.800 L13 7.200 L13 9.600 L8.500 12.200Z" fill="#f0a818"/><path d="M6.200 1.400 L9.400 .2 L13.600 1.400 L13.600 6.600 L10 8.400 L6.200 6.600Z" fill="#1fb43c" stroke="#148a2c" stroke-width=".5"/><path d="M6.200 1.400 L9.400 .2 L13.600 1.400 L10 2.800Z" fill="#5fe07c"/><path d="M10 2.800 L13.600 1.400 L13.600 6.600 L10 8.400Z" fill="#179a32"/></svg>
<span class="t" style="left:160.9px;top:200.0px;font-size:10.5px;color:#151515;transform:scaleX(0.899);">speaker.sldasm</span>
<span class="t" style="left:311.6px;top:200.0px;font-size:10.5px;color:#151515;transform:scaleX(0.988);">Admin</span>
<span class="t" style="left:405.5px;top:200.0px;font-size:10.5px;color:#151515;transform:scaleX(0.819);">241 KB</span>
<span class="t" style="left:446.3px;top:200.0px;font-size:10.5px;color:#151515;transform:scaleX(0.908);">SolidWorks As...</span>
<span class="t" style="left:529.0px;top:200.0px;font-size:10.5px;color:#151515;transform:scaleX(0.935);">Under Editing</span>
<div class="a" style="left:0;top:200.0px;width:644.0px;height:15px;overflow:hidden"><span class="t" style="left:612.3px;top:0px;font-size:10.5px;color:#151515;transform:scaleX(0.895);">2011-06-21</span></div>
<svg class="a" style="left:145.2px;top:215.9px" width="13.5" height="12.5" viewBox="0 0 13.5 12.5"><path d="M.5 3.2 L4 .6 L8 2.2 L8 4.600 L13 7 L13 9.600 L8.500 12.200 L.5 8.500Z" fill="#f9bc24" stroke="#e07c08" stroke-width="1" stroke-linejoin="round"/><path d="M.5 3.200 L4.500 5 L8 2.200 L4 .6Z" fill="#fdd858"/><path d="M4.500 7.400 L8 4.800 L13 7 L8.500 9.600Z" fill="#fdd650"/><path d="M.5 3.200 L4.500 5 L4.500 7.400 L8.500 9.600 L8.500 12.200 M4.500 5 L8 2.400 M8.500 9.600 L13 7" fill="none" stroke="#e07c08" stroke-width=".8"/><path d="M8.500 9.800 L13 7.200 L13 9.600 L8.500 12.200Z" fill="#f0a818"/></svg>
<span class="t" style="left:160.9px;top:215.8px;font-size:10.5px;color:#151515;transform:scaleX(0.914);">speaker_frame.sldprt</span>
<span class="t" style="left:311.6px;top:215.8px;font-size:10.5px;color:#151515;transform:scaleX(0.988);">Admin</span>
<span class="t" style="left:405.5px;top:215.8px;font-size:10.5px;color:#151515;transform:scaleX(0.819);">312 KB</span>
<span class="t" style="left:446.3px;top:215.8px;font-size:10.5px;color:#151515;transform:scaleX(0.894);">SolidWorks Pa...</span>
<span class="t" style="left:529.0px;top:215.8px;font-size:10.5px;color:#151515;transform:scaleX(0.935);">Under Editing</span>
<div class="a" style="left:0;top:215.8px;width:644.0px;height:15px;overflow:hidden"><span class="t" style="left:612.3px;top:0px;font-size:10.5px;color:#151515;transform:scaleX(0.895);">2011-06-21</span></div>
<div class="a" style="left:142px;top:268px;width:502px;height:12.5px;background:#eff0f3;border-top:1px solid #e6e8ec;box-sizing:border-box"></div>
<div class="a" style="left:157px;top:268.5px;width:331px;height:11.5px;border:1px solid #8f949c;box-sizing:border-box;border-radius:2px;background:linear-gradient(180deg,#eeeef0 0%,#dededf 45%,#b6b6ba 52%,#c2c2c6 100%)"></div>
<div class="a" style="left:316px;top:272px;width:1px;height:4.5px;background:#5f6874"></div>
<div class="a" style="left:318.5px;top:272px;width:1px;height:4.5px;background:#5f6874"></div>
<div class="a" style="left:321px;top:272px;width:1px;height:4.5px;background:#5f6874"></div>
<svg class="a" style="left:145px;top:271.5px" width="4" height="6" viewBox="0 0 4 6"><path d="M4 0 L4 6 L0 3Z" fill="#30363f"/></svg>
<svg class="a" style="left:636px;top:271.5px" width="4" height="6" viewBox="0 0 4 6"><path d="M0 0 L0 6 L4 3Z" fill="#30363f"/></svg>
<div class="a" style="left:142px;top:280.5px;width:502px;height:4.5px;background:#f8f9fc"></div>
<div class="a" style="left:142px;top:285px;width:502px;height:1px;background:#bccbe6"></div>
<div class="a" style="left:142px;top:286px;width:502px;height:22px;background-color:#e9eef7;background-image:repeating-linear-gradient(135deg,rgba(255,255,255,.55) 0 1px,transparent 1px 3px)"></div>
<div class="a" style="left:143.5px;top:287px;width:57px;height:21px;background:#fbfcfe;border:1px solid #c3cde0;border-bottom:none;box-sizing:border-box;border-radius:2px 2px 0 0"></div>
<svg class="a" style="left:148.5px;top:291px" width="12.5" height="11.5" viewBox="0 0 12.5 11.5"><path d="M2.600 5 V-.6 H7.600 L9.800 1.600 V5" fill="#f6f9fe" stroke="#b4c8ea" stroke-width=".8"/><path d="M3.400 4.600 Q3.400 2.400 6.200 2.400 Q9 2.400 9 4.600" fill="none" stroke="#8a8f98" stroke-width="1"/><circle cx="3.2" cy="7.4" r="2.7" fill="#f4f5f7" stroke="#7c828c" stroke-width="1"/><circle cx="9.2" cy="7.4" r="2.7" fill="#f4f5f7" stroke="#7c828c" stroke-width="1"/><rect x="5.2" y="5.6" width="2" height="2.4" fill="#9aa0aa"/></svg>
<span class="t" style="left:163.3px;top:289.4px;font-size:10.5px;color:#2a4180;transform:scaleX(0.881);-webkit-text-stroke:.15px #2a4180;">Preview</span>
<svg class="a" style="left:207.5px;top:289.5px" width="13" height="12.5" viewBox="0 0 13 12.5"><rect x=".5" y=".5" width="12" height="11.5" fill="#e9e6f2" stroke="#8f8aa8" stroke-width=".8"/><rect x="2" y="2" width="4" height="2" fill="#a79fc4"/><rect x="7" y="2" width="4" height="2" fill="#c9c4dc"/><rect x="2" y="5.2" width="9" height="1.6" fill="#b8b2d0"/><rect x="2" y="8" width="4" height="2.4" fill="#a79fc4"/><rect x="7.4" y="8" width="3.6" height="2.4" fill="#d6d2e6"/></svg>
<span class="t" style="left:224.0px;top:289.4px;font-size:10.5px;color:#2a4180;transform:scaleX(0.846);-webkit-text-stroke:.15px #2a4180;">Data Card</span>
<svg class="a" style="left:277.5px;top:290.5px" width="13.5" height="12.5" viewBox="0 0 13.5 12.5"><path d="M.6 .5 L7 .5 L9.4 3 L9.4 12 L.6 12Z" fill="#fafbfd" stroke="#9aa2b0" stroke-width=".7"/><path d="M3 4.6 L7.6 6.6 L5.4 7.2 L4.6 9.2Z" fill="#e0282c"/><circle cx="9" cy="8.8" r="3" fill="#fff" stroke="#2a50d8" stroke-width="1.5"/><path d="M7.6 8.8 H10.4" stroke="#2a50d8" stroke-width="1"/></svg>
<span class="t" style="left:292.0px;top:289.4px;font-size:10.5px;color:#2a4180;transform:scaleX(0.868);-webkit-text-stroke:.15px #2a4180;">Version 1/1</span>
<svg class="a" style="left:350.5px;top:290.5px" width="12" height="12" viewBox="0 0 12 12"><rect x="2.4" y=".5" width="9" height="9" fill="#e4e6f1" stroke="#8c93b2" stroke-width=".8"/><rect x=".5" y="2.6" width="9" height="9" fill="#f0f1f7" stroke="#8c93b2" stroke-width=".8"/><path d="M.5 5.4 H9.5 M3.6 2.6 V11.6" stroke="#a9aec8" stroke-width=".7"/></svg>
<span class="t" style="left:364.0px;top:289.4px;font-size:10.5px;color:#2a4180;transform:scaleX(0.878);-webkit-text-stroke:.15px #2a4180;">Bill of Materials</span>
<svg class="a" style="left:439.3px;top:290px" width="13.5" height="12.5" viewBox="0 0 13.5 12.5"><rect x=".5" y=".5" width="3.6" height="3.2" fill="#eef1f8" stroke="#8ea0c8" stroke-width=".7"/><path d="M5 3 H11.4 V9 H9 M5 3 V8.4" fill="none" stroke="#e02828" stroke-width="1.3"/><rect x="2.6" y="8.6" width="3.8" height="3.2" fill="#eef1f8" stroke="#8ea0c8" stroke-width=".7"/><rect x="8.6" y="8.6" width="3.8" height="3.2" fill="#eef1f8" stroke="#8ea0c8" stroke-width=".7"/></svg>
<span class="t" style="left:454.5px;top:289.4px;font-size:10.5px;color:#2a4180;transform:scaleX(0.857);-webkit-text-stroke:.15px #2a4180;">Contains</span>
<svg class="a" style="left:502.4px;top:290px" width="13.5" height="12.5" viewBox="0 0 13.5 12.5"><rect x=".8" y=".5" width="3.8" height="3.2" fill="#eef1f8" stroke="#8ea0c8" stroke-width=".7"/><rect x="6.6" y=".5" width="3.8" height="3.2" fill="#eef1f8" stroke="#8ea0c8" stroke-width=".7"/><path d="M2 4.6 V11.4 H8 M8 4.6 V7.4" fill="none" stroke="#e02828" stroke-width="1.3"/><rect x="8.8" y="7.8" width="3.8" height="3.6" fill="#eef1f8" stroke="#8ea0c8" stroke-width=".7"/></svg>
<span class="t" style="left:517.9px;top:289.4px;font-size:10.5px;color:#2a4180;transform:scaleX(0.862);-webkit-text-stroke:.15px #2a4180;">Where Used</span>
<svg class="a" style="left:142px;top:308px;overflow:hidden" width="251" height="163" viewBox="142 308 251 163">
<defs>
<clipPath id="cc"><ellipse cx="0" cy="0" rx="41.500" ry="48.200" transform="translate(254.800,394.500) skewX(5.100)"/></clipPath><filter id="bl" x="-20%" y="-20%" width="140%" height="140%"><feGaussianBlur stdDeviation="2.500"/></filter><linearGradient id="pbg" x1="0" y1="0" x2="0" y2="1"><stop offset="0" stop-color="#000"/><stop offset=".07" stop-color="#0a0a0a"/><stop offset=".25" stop-color="#2c2e32"/><stop offset=".45" stop-color="#53565c"/><stop offset=".65" stop-color="#7e8188"/><stop offset=".85" stop-color="#aeb1b8"/><stop offset="1" stop-color="#cdd0d6"/></linearGradient>
<radialGradient id="pbg2" cx="88%" cy="100%" r="42%"><stop offset="0" stop-color="#f4f4f4" stop-opacity=".8"/><stop offset="1" stop-color="#f2f2f2" stop-opacity="0"/></radialGradient>
<linearGradient id="fr" x1="0" y1="0" x2="1" y2="1"><stop offset="0" stop-color="#b8b8b8"/><stop offset=".5" stop-color="#b2b2b2"/><stop offset="1" stop-color="#a6a6a6"/></linearGradient>
<linearGradient id="rim" x1="0" y1="0" x2=".3" y2="1"><stop offset="0" stop-color="#e4700a"/><stop offset=".55" stop-color="#ec7a0a"/><stop offset="1" stop-color="#f49a22"/></linearGradient>
<linearGradient id="cone" x1="0.15" y1="0" x2=".85" y2="1"><stop offset="0" stop-color="#7a3a06"/><stop offset=".3" stop-color="#a4560a"/><stop offset=".6" stop-color="#d27a10"/><stop offset="1" stop-color="#ee9822"/></linearGradient>
<radialGradient id="hl" cx="50%" cy="50%" r="50%"><stop offset="0" stop-color="#fffef0" stop-opacity="1"/><stop offset=".4" stop-color="#fff4a0" stop-opacity="1"/><stop offset=".7" stop-color="#fbd850" stop-opacity=".8"/><stop offset="1" stop-color="#f4b030" stop-opacity="0"/></radialGradient>
<radialGradient id="mg" cx="45%" cy="40%" r="60%"><stop offset="0" stop-color="#f0b0f0"/><stop offset=".6" stop-color="#d870d8"/><stop offset="1" stop-color="#c458c4"/></radialGradient>
</defs>
<rect x="142" y="308" width="251" height="164" fill="url(#pbg)"/>
<rect x="142" y="308" width="251" height="164" fill="url(#pbg2)"/>
<path d="M204 438 L262 470 L300 470 L320 450 L318 420Z" fill="#3c3c3c" opacity=".4" filter="url(#bl)"/>
<path d="M198.3,390.0 C198.6,383.8 198.7,371.7 199.5,365.0 C200.3,358.3 201.8,354.2 203.0,350.0 C204.2,345.8 205.3,343.0 207.0,340.0 C208.7,337.0 210.7,334.2 213.0,332.0 C215.3,329.8 218.0,328.2 221.0,327.0 C224.0,325.8 227.3,325.2 231.0,325.0 C234.7,324.8 239.0,325.3 243.0,326.0 C247.0,326.7 250.3,327.7 255.0,329.0 C259.7,330.3 266.0,332.2 271.0,334.0 C276.0,335.8 280.7,337.7 285.0,340.0 C289.3,342.3 293.3,344.9 297.0,348.0 C300.7,351.1 304.4,354.5 307.0,358.5 C309.6,362.5 311.2,366.8 312.5,372.0 C313.8,377.2 314.4,384.5 315.0,390.0 C315.6,395.5 315.9,400.0 316.0,405.0 C316.1,410.0 315.8,415.8 315.5,420.0 C315.2,424.2 315.1,425.8 314.3,430.0 C313.6,434.2 312.5,440.9 311.0,445.0 C309.5,449.1 307.9,451.6 305.3,454.6 C302.7,457.6 299.8,461.0 295.6,462.9 C291.5,464.8 284.7,465.3 280.4,465.8 C276.1,466.3 274.1,466.5 270.0,466.0 C265.9,465.5 261.8,464.5 256.0,463.0 C250.2,461.5 241.5,459.5 235.0,457.0 C228.5,454.5 221.5,451.0 217.0,448.0 C212.5,445.0 210.5,442.5 208.0,439.0 C205.5,435.5 203.5,431.0 202.0,427.0 C200.5,423.0 199.7,419.2 199.0,415.0 C198.3,410.8 197.9,406.2 197.8,402.0 C197.7,397.8 198.0,396.2 198.3,390.0Z" fill="#505050" stroke="#1c1c1c" stroke-width=".9"/>
<path d="M198.7,388.6 C199.0,382.5 199.1,370.7 199.9,364.2 C200.7,357.7 202.1,353.6 203.3,349.6 C204.5,345.5 205.6,342.7 207.2,339.8 C208.8,336.9 210.8,334.1 213.1,332.0 C215.3,329.9 217.9,328.3 220.8,327.1 C223.8,326.0 227.0,325.3 230.6,325.2 C234.2,325.0 238.4,325.5 242.3,326.1 C246.2,326.8 249.4,327.8 254.0,329.1 C258.6,330.4 264.7,332.2 269.6,333.9 C274.5,335.7 279.0,337.5 283.2,339.8 C287.5,342.1 291.4,344.6 294.9,347.6 C298.5,350.6 302.2,353.9 304.7,357.8 C307.2,361.7 308.8,365.9 310.1,371.0 C311.4,376.1 311.9,383.2 312.5,388.6 C313.1,393.9 313.4,398.3 313.5,403.2 C313.6,408.1 313.3,413.7 313.0,417.8 C312.7,421.9 312.5,423.5 311.8,427.6 C311.1,431.6 310.1,438.2 308.6,442.2 C307.1,446.2 305.5,448.6 303.0,451.5 C300.5,454.4 297.6,457.8 293.6,459.6 C289.5,461.4 282.9,462.0 278.8,462.5 C274.6,463.0 272.6,463.1 268.6,462.6 C264.7,462.2 260.7,461.2 255.0,459.7 C249.3,458.3 240.8,456.3 234.5,453.9 C228.2,451.4 221.3,448.0 216.9,445.1 C212.6,442.2 210.6,439.7 208.2,436.3 C205.7,432.9 203.8,428.5 202.3,424.6 C200.9,420.7 200.1,417.0 199.4,412.9 C198.7,408.9 198.3,404.3 198.2,400.2 C198.1,396.2 198.4,394.6 198.7,388.6Z" fill="url(#fr)" stroke="#3a3a3a" stroke-width=".6"/>
<ellipse cx="215.900" cy="339.800" rx="3.800" ry="4.600" fill="#262626" stroke="#111" stroke-width=".8" transform="rotate(-20 215.900 339.800)"/>
<ellipse cx="298.500" cy="358.200" rx="3.200" ry="4.400" fill="#4a50a4" stroke="#15153a" stroke-width=".9" transform="rotate(-15 298.500 358.200)"/>
<ellipse cx="213.600" cy="431.900" rx="4" ry="4.800" fill="#a2a2a2" stroke="#222" stroke-width="1.100"/>
<ellipse cx="295.600" cy="450.400" rx="3.800" ry="4.400" fill="#7c7c7c" stroke="#222" stroke-width="1.100"/>
<g transform="translate(256,394.500) skewX(5.100)"><ellipse cx="0" cy="0" rx="50" ry="55.500" fill="url(#rim)" stroke="#2a1402" stroke-width="1"/></g>
<g transform="translate(254.800,394.500) skewX(5.100)"><ellipse cx="0" cy="0" rx="42.300" ry="49" fill="url(#cone)" stroke="#2a1402" stroke-width="1.100"/><ellipse cx="0" cy="0" rx="38.500" ry="45" fill="none" stroke="#5a2c04" stroke-width=".5" opacity=".5"/></g>
<g clip-path="url(#cc)"><ellipse cx="232" cy="419" rx="30" ry="19" fill="url(#hl)" transform="rotate(-52 232 419)"/><ellipse cx="229" cy="423" rx="12" ry="4" fill="#fffef4" opacity=".8" transform="rotate(-52 229 423)"/>
<ellipse cx="244" cy="435.500" rx="20" ry="8" fill="url(#hl)" opacity=".85" transform="rotate(24 244 435.500)"/><ellipse cx="282" cy="428" rx="16" ry="9" fill="url(#hl)" opacity=".4" transform="rotate(-40 282 428)"/></g>
<path d="M260 371 Q277 368.500 283 382 Q286.500 395 279 409 L266 404Z" fill="#ec9420" stroke="#5a2c04" stroke-width=".7"/>
<path d="M272 374.500 Q279.500 376.500 281.500 386" fill="none" stroke="#fcd870" stroke-width="3.400" stroke-linecap="round"/>
<g transform="translate(6.500,.6)"><path d="M229.8,393 C229.8,381 238,372.8 248,372.8 C260,372.8 270.5,381 270.5,394.6 C270.5,405 268,415 264,425.5 L259,430.2 L237,424 L232,407 C230.5,402 229.8,398 229.8,393Z" fill="#6e246e" stroke="#1a061a" stroke-width="1"/></g>
<path d="M248,372.800 L254.500,373.400 L265.500,430.800 L259,430.200Z" fill="#6e246e"/>
<path d="M259,430.200 L265.500,430.800 L270.500,426 L264,425.500Z" fill="#240a24"/>
<path d="M229.8,393 C229.8,381 238,372.8 248,372.8 C260,372.8 270.5,381 270.5,394.6 C270.5,405 268,415 264,425.5 L259,430.2 L237,424 L232,407 C230.5,402 229.8,398 229.8,393Z" fill="url(#mg)" stroke="#3a103a" stroke-width=".9"/>
<ellipse cx="251.300" cy="396" rx="17.300" ry="19.500" fill="none" stroke="#4a164a" stroke-width="1" transform="rotate(-8 251.300 396)"/>
<ellipse cx="251.800" cy="396" rx="13.200" ry="15.300" fill="#c458c4" stroke="#3a103a" stroke-width="1" transform="rotate(-8 251.800 396)"/>
<ellipse cx="252.200" cy="396.300" rx="10.300" ry="12.200" fill="#d880d8" stroke="#6a2c6a" stroke-width=".7" transform="rotate(-8 252.200 396.300)"/>
<path d="M243.800 400 Q246 407.500 253 409 Q258 408 258.500 402 Q252 404 243.800 400Z" fill="#fff" opacity=".95"/>
<circle cx="255" cy="393.800" r="4.800" fill="#e8a0e8" stroke="#7a2c7a" stroke-width=".7"/>
<circle cx="254" cy="392.400" r="1.900" fill="#fff" opacity=".95"/>
<path d="M273.500 318 H284.500 M281.500 315.500 L284.800 318 L281.500 320.500" fill="none" stroke="#dcdc98" stroke-width="1.100"/>
<rect x="286.300" y="312.300" width="1.200" height="11.400" fill="#e4e44c"/>
<text x="290.300" y="322.700" font-family="Liberation Sans,sans-serif" font-size="19" font-weight="bold" fill="#eeee98" textLength="10.500" lengthAdjust="spacingAndGlyphs">e</text>
<text x="307.500" y="322" font-family="Liberation Sans,sans-serif" font-size="11.500" fill="#424242" textLength="81" lengthAdjust="spacingAndGlyphs">DRAWINGS</text>
<rect x="348" y="312" width="6" height="11" fill="#000" opacity=".6"/>
<text x="388.500" y="317" font-family="Liberation Sans,sans-serif" font-size="5" fill="#7a7a7a">®</text>
<text x="217" y="457" font-family="Liberation Sans,sans-serif" font-size="5" font-weight="bold" fill="#fa0808" textLength="82.500" lengthAdjust="spacingAndGlyphs">This file was saved by an educational version</text>
<text x="217" y="462.300" font-family="Liberation Sans,sans-serif" font-size="5" font-weight="bold" fill="#fa0808" textLength="110.500" lengthAdjust="spacingAndGlyphs">SolidWorks Education Edition. For Instructional Use Only.</text>
</svg>
<div class="a" style="left:141.5px;top:307.5px;width:252px;height:1px;background:#6a7284"></div>
<div class="a" style="left:393px;top:307.5px;width:4.5px;height:163.5px;background:#f3f5f9"></div>
<div class="a" style="left:397px;top:307.5px;width:247px;height:163.5px;background:#f3f5f9"></div>
<div class="a" style="left:397px;top:307.5px;width:247px;height:18px;background:#f1f3f8"></div>
<div class="a" style="left:397px;top:324.5px;width:247px;height:146.5px;background:#fff;border:1px solid #dde3ee;box-sizing:border-box"></div>
<div class="a" style="left:484.5px;top:324.5px;width:159px;height:1px;background:#b4bac6"></div>
<div class="a" style="left:484px;top:312.5px;width:125.5px;height:12.5px;background:linear-gradient(180deg,#f4f5f8,#e9ebf0);border:1px solid #b1b7c2;border-bottom:none;box-sizing:border-box"></div>
<div class="a" style="left:397.5px;top:308.5px;width:87.5px;height:17px;background:#fff;border:1px solid #8e96a4;border-bottom:none;box-sizing:border-box;border-radius:2px 2px 0 0"></div>
<svg class="a" style="left:403.3px;top:311.8px" width="14.5" height="9.5" viewBox="0 0 14.5 9.5"><path d="M1 .5 V9 M1 4.600 H7.500" stroke="#8a8e96" stroke-width="1.500" fill="none"/><rect x="6.500" y="2.200" width="6.500" height="5.600" rx="1" fill="#f0a818" stroke="#b87808" stroke-width=".8"/><rect x="8" y="3.600" width="3.500" height="2.600" fill="#fde9a8" opacity=".8"/></svg>
<span class="t" style="left:422.3px;top:309.8px;font-size:10.5px;color:#151515;transform:scaleX(0.885);">Dual Speaker</span>
<svg class="a" style="left:489px;top:314px" width="14.5" height="9.5" viewBox="0 0 14.5 9.5"><path d="M1 .5 V9 M1 4.600 H7.500" stroke="#a8acb4" stroke-width="1.500" fill="none"/><rect x="6.500" y="2.200" width="6.500" height="5.600" rx="1" fill="#d8d8dc" stroke="#9a9ea6" stroke-width=".8"/><rect x="8" y="3.600" width="3.500" height="2.600" fill="#fde9a8" opacity=".8"/></svg>
<span class="t" style="left:506.8px;top:310.9px;font-size:10.5px;color:#151515;transform:scaleX(0.884);">Dual Speaker Glueable</span>
<div class="a" style="left:614.5px;top:311px;width:11.5px;height:11.5px;border:1px solid #aeb6c6;box-sizing:border-box;border-radius:2px;background:linear-gradient(180deg,#fafbfd,#e1e7f2)"></div>
<svg class="a" style="left:617.5px;top:314.2px" width="5" height="5" viewBox="0 0 5 5"><path d="M4.200 0 L4.200 5 L1 2.500Z" fill="#2a4a9a"/></svg>
<div class="a" style="left:629px;top:311px;width:11.5px;height:11.5px;border:1px solid #aeb6c6;box-sizing:border-box;border-radius:2px;background:linear-gradient(180deg,#fafbfd,#e1e7f2)"></div>
<svg class="a" style="left:632px;top:314.2px" width="5" height="5" viewBox="0 0 5 5"><path d="M1.400 0 L1.400 5 L4.600 2.500Z" fill="#2a4a9a"/></svg>
<span class="t" style="left:401.8px;top:327.0px;font-size:10.5px;color:#2a3140;transform:scaleX(0.911);">Variable</span>
<span class="t" style="left:526.8px;top:327.0px;font-size:10.5px;color:#2a3140;transform:scaleX(0.878);">Value</span>
<div class="a" style="left:398px;top:342.5px;width:232px;height:1px;background:#e1e7f0"></div>
<div class="a" style="left:522px;top:327px;width:1px;height:15px;background:repeating-linear-gradient(180deg,#d5dbe6 0 1px,#fff 1px 2px)"></div>
<svg class="a" style="left:400.2px;top:346.3px" width="13.5" height="12" viewBox="0 0 13.5 12"><defs><linearGradient id="cy_76" x1="0" y1="0" x2="1" y2="0"><stop offset="0" stop-color="#f4b810"/><stop offset=".4" stop-color="#fbd03c"/><stop offset=".7" stop-color="#e49c04"/><stop offset=".8" stop-color="#4a3a08"/><stop offset="1" stop-color="#7a5c10"/></linearGradient></defs><path d="M.4 3 V9 Q.4 11.600 6.700 11.600 Q13 11.600 13 9 V3Z" fill="url(#cy_76)" stroke="#b07c04" stroke-width=".5"/><ellipse cx="6.700" cy="3" rx="6.300" ry="2.700" fill="#fee684" stroke="#dca410" stroke-width=".6"/><ellipse cx="6" cy="2.800" rx="3.600" ry="1.300" fill="#fff8c8"/></svg>
<span class="t" style="left:415.0px;top:345.7px;font-size:10.5px;color:#151515;transform:scaleX(1.002);">Author</span>
<div class="a" style="left:0;top:345.7px;width:630.0px;height:15px;overflow:hidden"><span class="t" style="left:526.8px;top:0px;font-size:10.5px;color:#151515;transform:scaleX(0.974);">Admin</span></div>
<svg class="a" style="left:400.2px;top:362px" width="13.5" height="12" viewBox="0 0 13.5 12"><defs><linearGradient id="cy_77" x1="0" y1="0" x2="1" y2="0"><stop offset="0" stop-color="#f4b810"/><stop offset=".4" stop-color="#fbd03c"/><stop offset=".7" stop-color="#e49c04"/><stop offset=".8" stop-color="#4a3a08"/><stop offset="1" stop-color="#7a5c10"/></linearGradient></defs><path d="M.4 3 V9 Q.4 11.600 6.700 11.600 Q13 11.600 13 9 V3Z" fill="url(#cy_77)" stroke="#b07c04" stroke-width=".5"/><ellipse cx="6.700" cy="3" rx="6.300" ry="2.700" fill="#fee684" stroke="#dca410" stroke-width=".6"/><ellipse cx="6" cy="2.800" rx="3.600" ry="1.300" fill="#fff8c8"/></svg>
<span class="t" style="left:415.0px;top:361.4px;font-size:10.5px;color:#151515;transform:scaleX(0.926);">Cost</span>
<div class="a" style="left:0;top:361.4px;width:630.0px;height:15px;overflow:hidden"><span class="t" style="left:526.8px;top:0px;font-size:10.5px;color:#151515;transform:scaleX(0.841);">$15.93</span></div>
<svg class="a" style="left:400.2px;top:377.8px" width="13.5" height="12" viewBox="0 0 13.5 12"><defs><linearGradient id="cy_78" x1="0" y1="0" x2="1" y2="0"><stop offset="0" stop-color="#f4b810"/><stop offset=".4" stop-color="#fbd03c"/><stop offset=".7" stop-color="#e49c04"/><stop offset=".8" stop-color="#4a3a08"/><stop offset="1" stop-color="#7a5c10"/></linearGradient></defs><path d="M.4 3 V9 Q.4 11.600 6.700 11.600 Q13 11.600 13 9 V3Z" fill="url(#cy_78)" stroke="#b07c04" stroke-width=".5"/><ellipse cx="6.700" cy="3" rx="6.300" ry="2.700" fill="#fee684" stroke="#dca410" stroke-width=".6"/><ellipse cx="6" cy="2.800" rx="3.600" ry="1.300" fill="#fff8c8"/></svg>
<span class="t" style="left:415.0px;top:377.2px;font-size:10.5px;color:#151515;transform:scaleX(0.969);">Date</span>
<div class="a" style="left:0;top:377.2px;width:630.0px;height:15px;overflow:hidden"><span class="t" style="left:526.8px;top:0px;font-size:10.5px;color:#151515;transform:scaleX(0.895);">2011-06-21</span></div>
<svg class="a" style="left:400.2px;top:393.5px" width="13.5" height="12" viewBox="0 0 13.5 12"><defs><linearGradient id="cy_79" x1="0" y1="0" x2="1" y2="0"><stop offset="0" stop-color="#f4b810"/><stop offset=".4" stop-color="#fbd03c"/><stop offset=".7" stop-color="#e49c04"/><stop offset=".8" stop-color="#4a3a08"/><stop offset="1" stop-color="#7a5c10"/></linearGradient></defs><path d="M.4 3 V9 Q.4 11.600 6.700 11.600 Q13 11.600 13 9 V3Z" fill="url(#cy_79)" stroke="#b07c04" stroke-width=".5"/><ellipse cx="6.700" cy="3" rx="6.300" ry="2.700" fill="#fee684" stroke="#dca410" stroke-width=".6"/><ellipse cx="6" cy="2.800" rx="3.600" ry="1.300" fill="#fff8c8"/></svg>
<span class="t" style="left:415.0px;top:392.9px;font-size:10.5px;color:#151515;transform:scaleX(0.946);">Description</span>
<div class="a" style="left:0;top:392.9px;width:630.0px;height:15px;overflow:hidden"><span class="t" style="left:526.8px;top:0px;font-size:10.5px;color:#151515;transform:scaleX(0.925);">Dual Speaker (Mountab</span></div>
<svg class="a" style="left:400.2px;top:409.2px" width="13.5" height="12" viewBox="0 0 13.5 12"><defs><linearGradient id="cy_80" x1="0" y1="0" x2="1" y2="0"><stop offset="0" stop-color="#f4b810"/><stop offset=".4" stop-color="#fbd03c"/><stop offset=".7" stop-color="#e49c04"/><stop offset=".8" stop-color="#4a3a08"/><stop offset="1" stop-color="#7a5c10"/></linearGradient></defs><path d="M.4 3 V9 Q.4 11.600 6.700 11.600 Q13 11.600 13 9 V3Z" fill="url(#cy_80)" stroke="#b07c04" stroke-width=".5"/><ellipse cx="6.700" cy="3" rx="6.300" ry="2.700" fill="#fee684" stroke="#dca410" stroke-width=".6"/><ellipse cx="6" cy="2.800" rx="3.600" ry="1.300" fill="#fff8c8"/></svg>
<span class="t" style="left:415.0px;top:408.6px;font-size:10.5px;color:#151515;transform:scaleX(0.900);">Design Checker Status</span>
<svg class="a" style="left:400.2px;top:424.9px" width="13.5" height="12" viewBox="0 0 13.5 12"><defs><linearGradient id="cy_81" x1="0" y1="0" x2="1" y2="0"><stop offset="0" stop-color="#f4b810"/><stop offset=".4" stop-color="#fbd03c"/><stop offset=".7" stop-color="#e49c04"/><stop offset=".8" stop-color="#4a3a08"/><stop offset="1" stop-color="#7a5c10"/></linearGradient></defs><path d="M.4 3 V9 Q.4 11.600 6.700 11.600 Q13 11.600 13 9 V3Z" fill="url(#cy_81)" stroke="#b07c04" stroke-width=".5"/><ellipse cx="6.700" cy="3" rx="6.300" ry="2.700" fill="#fee684" stroke="#dca410" stroke-width=".6"/><ellipse cx="6" cy="2.800" rx="3.600" ry="1.300" fill="#fff8c8"/></svg>
<span class="t" style="left:415.0px;top:424.3px;font-size:10.5px;color:#151515;transform:scaleX(0.973);">Document Number</span>
<svg class="a" style="left:400.2px;top:440.4px" width="13.5" height="12" viewBox="0 0 13.5 12"><defs><linearGradient id="cy_82" x1="0" y1="0" x2="1" y2="0"><stop offset="0" stop-color="#f4b810"/><stop offset=".4" stop-color="#fbd03c"/><stop offset=".7" stop-color="#e49c04"/><stop offset=".8" stop-color="#4a3a08"/><stop offset="1" stop-color="#7a5c10"/></linearGradient></defs><path d="M.4 3 V9 Q.4 11.600 6.700 11.600 Q13 11.600 13 9 V3Z" fill="url(#cy_82)" stroke="#b07c04" stroke-width=".5"/><ellipse cx="6.700" cy="3" rx="6.300" ry="2.700" fill="#fee684" stroke="#dca410" stroke-width=".6"/><ellipse cx="6" cy="2.800" rx="3.600" ry="1.300" fill="#fff8c8"/></svg>
<span class="t" style="left:415.0px;top:439.8px;font-size:10.5px;color:#151515;transform:scaleX(0.969);">Number</span>
<div class="a" style="left:0;top:439.8px;width:630.0px;height:15px;overflow:hidden"><span class="t" style="left:526.8px;top:0px;font-size:10.5px;color:#151515;transform:scaleX(0.881);">DS-ASM-987654</span></div>
<div class="a" style="left:401px;top:455.5px;width:11px;height:3px;background:#fde88c;border-radius:5px 5px 0 0;border:1px solid #d8a010;border-bottom:none;box-sizing:border-box"></div>
<div class="a" style="left:630px;top:325.5px;width:13px;height:133.5px;background:#f0f1f4;border-left:1px solid #e3e6eb;box-sizing:border-box"></div>
<div class="a" style="left:631px;top:339.5px;width:11.5px;height:40.5px;border:1px solid #8e949e;box-sizing:border-box;border-radius:2px;background:linear-gradient(90deg,#eeeff1 0%,#dcdee2 45%,#bfc2c8 55%,#cbced3 100%)"></div>
<div class="a" style="left:634px;top:356px;width:5.5px;height:1px;background:#6b7480"></div>
<div class="a" style="left:634px;top:358.5px;width:5.5px;height:1px;background:#6b7480"></div>
<div class="a" style="left:634px;top:361px;width:5.5px;height:1px;background:#6b7480"></div>
<svg class="a" style="left:633.5px;top:330.5px" width="6" height="3.5" viewBox="0 0 6 3.5"><path d="M0 3.500 L3 0 L6 3.500Z" fill="#404650"/></svg>
<svg class="a" style="left:633.5px;top:449.5px" width="6" height="3.5" viewBox="0 0 6 3.5"><path d="M0 0 L6 0 L3 3.500Z" fill="#404650"/></svg>
<div class="a" style="left:398px;top:459px;width:245px;height:12px;background:#eff0f3;border-top:1px solid #e6e8ec;box-sizing:border-box"></div>
<div class="a" style="left:411.5px;top:460px;width:189px;height:10.5px;border:1px solid #8f949c;box-sizing:border-box;border-radius:2px;background:linear-gradient(180deg,#eeeef0 0%,#dededf 45%,#b6b6ba 52%,#c2c2c6 100%)"></div>
<div class="a" style="left:502.5px;top:463px;width:1px;height:4.5px;background:#5f6874"></div>
<div class="a" style="left:505px;top:463px;width:1px;height:4.5px;background:#5f6874"></div>
<div class="a" style="left:507.5px;top:463px;width:1px;height:4.5px;background:#5f6874"></div>
<svg class="a" style="left:402px;top:462.2px" width="4" height="6" viewBox="0 0 4 6"><path d="M4 0 L4 6 L0 3Z" fill="#30363f"/></svg>
<svg class="a" style="left:621px;top:462.2px" width="4" height="6" viewBox="0 0 4 6"><path d="M0 0 L0 6 L4 3Z" fill="#30363f"/></svg>
<div class="a" style="left:630px;top:459px;width:13px;height:12px;background:#eff0f3"></div>
<div class="a" style="left:8px;top:110.5px;width:636px;height:1.2px;background:#8f959f"></div>
<span class="t" style="left:74.5px;top:6.3px;font-size:13.5px;color:#1a1a1a;transform:scaleX(0.919);-webkit-text-stroke:0;">1</span>
<div class="a" style="left:77px;top:25px;width:1px;height:85.7px;background:#111"></div>
<svg class="a" style="left:71.7px;top:104.3px" width="11.6" height="10.4" viewBox="0 0 11.6 10.4"><path d="M0 0 L5.800 2.300 L11.600 0 L5.800 10.400Z" fill="#000"/></svg>
<span class="t" style="left:173.5px;top:6.3px;font-size:13.5px;color:#1a1a1a;transform:scaleX(0.919);-webkit-text-stroke:0;">2</span>
<div class="a" style="left:176px;top:25px;width:1px;height:69.5px;background:#111"></div>
<svg class="a" style="left:170.7px;top:88.1px" width="11.6" height="10.4" viewBox="0 0 11.6 10.4"><path d="M0 0 L5.800 2.300 L11.600 0 L5.800 10.400Z" fill="#000"/></svg>
<span class="t" style="left:273.5px;top:6.3px;font-size:13.5px;color:#1a1a1a;transform:scaleX(0.919);-webkit-text-stroke:0;">3</span>
<div class="a" style="left:276px;top:25px;width:1px;height:83.8px;background:#111"></div>
<svg class="a" style="left:270.7px;top:102.4px" width="11.6" height="10.4" viewBox="0 0 11.6 10.4"><path d="M0 0 L5.800 2.300 L11.600 0 L5.800 10.400Z" fill="#000"/></svg>
<span class="t" style="left:375.5px;top:6.3px;font-size:13.5px;color:#1a1a1a;transform:scaleX(0.919);-webkit-text-stroke:0;">4</span>
<div class="a" style="left:378px;top:25px;width:1px;height:133.8px;background:#111"></div>
<svg class="a" style="left:372.7px;top:152.4px" width="11.6" height="10.4" viewBox="0 0 11.6 10.4"><path d="M0 0 L5.800 2.300 L11.600 0 L5.800 10.400Z" fill="#000"/></svg>
<span class="t" style="left:468.5px;top:6.3px;font-size:13.5px;color:#1a1a1a;transform:scaleX(0.919);-webkit-text-stroke:0;">5</span>
<div class="a" style="left:471px;top:25px;width:1px;height:257px;background:#111"></div>
<svg class="a" style="left:465.7px;top:275.6px" width="11.6" height="10.4" viewBox="0 0 11.6 10.4"><path d="M0 0 L5.800 2.300 L11.600 0 L5.800 10.400Z" fill="#000"/></svg>
</body></html>
